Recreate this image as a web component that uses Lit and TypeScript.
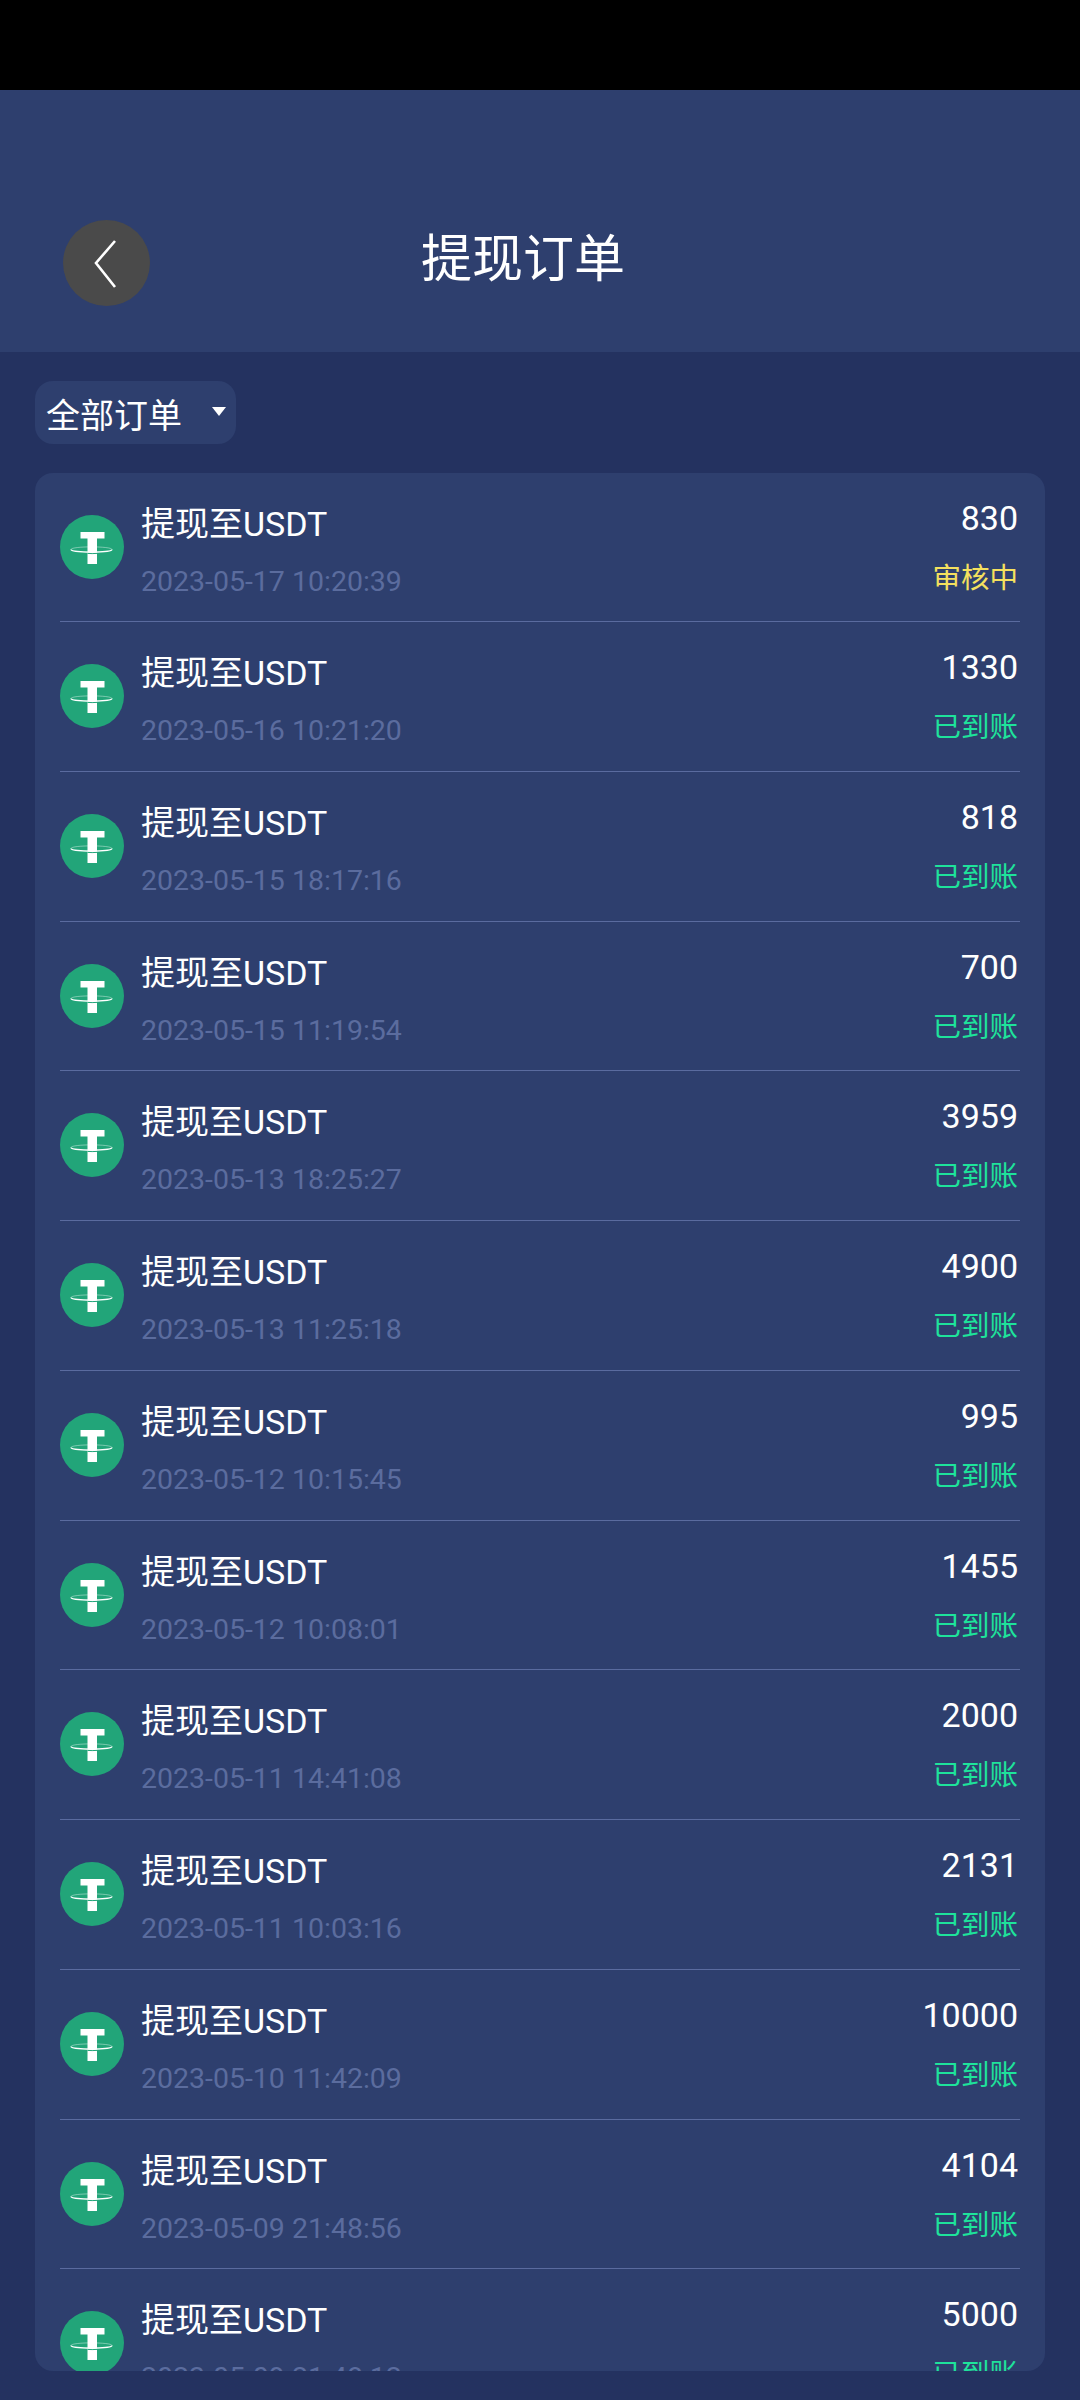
import { LitElement, html, css, svg } from "lit";
import { customElement } from "lit/decorators.js";

const rows: [string, string, string][] = [
  ["2023-05-17 10:20:39", "830", "审核中"],
  ["2023-05-16 10:21:20", "1330", "已到账"],
  ["2023-05-15 18:17:16", "818", "已到账"],
  ["2023-05-15 11:19:54", "700", "已到账"],
  ["2023-05-13 18:25:27", "3959", "已到账"],
  ["2023-05-13 11:25:18", "4900", "已到账"],
  ["2023-05-12 10:15:45", "995", "已到账"],
  ["2023-05-12 10:08:01", "1455", "已到账"],
  ["2023-05-11 14:41:08", "2000", "已到账"],
  ["2023-05-11 10:03:16", "2131", "已到账"],
  ["2023-05-10 11:42:09", "10000", "已到账"],
  ["2023-05-09 21:48:56", "4104", "已到账"],
  ["2023-05-09 21:48:12", "5000", "已到账"],
];

const tether = svg`
  <circle cx="32" cy="32" r="32" fill="#22a579"></circle>
  <rect x="20.5" y="17" width="24" height="6.5" fill="#fff"></rect>
  <rect x="27.5" y="22" width="9.5" height="27" fill="#fff"></rect>
  <path d="M11 34.5 C11 31 52 31 52 34.5" fill="none" stroke="#fff" stroke-opacity=".4" stroke-width="1"></path>
  <path d="M11 34.5 C11 38 52 38 52 34.5" fill="none" stroke="#fff" stroke-width="1.3"></path>
  <path d="M27.5 38.4 Q32 38.8 37 38.4" fill="none" stroke="#22a579" stroke-width="1"></path>
`;

@customElement("app-root")
export class AppRoot extends LitElement {
  static styles = css`
    :host {
      display: block;
      width: 1080px;
      height: 2400px;
      overflow: hidden;
      background: #243260;
      font-family: Roboto, "Noto Sans CJK SC", sans-serif;
      color: #fff;
    }
    .status-bar { height: 90px; background: #000; }
    .header {
      height: 262px;
      box-sizing: border-box;
      background: #2e3f6e;
      display: flex;
      align-items: flex-start;
      padding: 130px 0 0 63px;
    }
    .back {
      width: 87px;
      height: 86px;
      border-radius: 50%;
      background: #4a4a4a;
      display: flex;
      align-items: center;
      justify-content: center;
      flex: none;
    }
    .back svg { display: block; }
    .title {
      margin: -3px 0 0 271px;
      font-size: 51px;
      line-height: 86px;
    }
    .content { padding: 29px 35px 0 35px; }
    .select {
      width: 201px;
      height: 63px;
      box-sizing: border-box;
      border-radius: 18px;
      background: #2e3f6e;
      display: flex;
      align-items: center;
      padding-left: 11px;
      font-size: 34px;
    }
    .select .label { margin-top: 2px; }
    .select .arrow {
      width: 0;
      height: 0;
      margin-left: 30px;
      margin-top: -3px;
      border-left: 7px solid transparent;
      border-right: 7px solid transparent;
      border-top: 9px solid #fff;
    }
    .card {
      margin-top: 29px;
      height: 1898px;
      box-sizing: border-box;
      overflow: hidden;
      border-radius: 18px;
      background: #2e3f6e;
      padding: 0 25px;
    }
    .row {
      height: 149.75px;
      box-sizing: border-box;
      border-bottom: 1px solid #5a6b9f;
      display: flex;
      align-items: flex-start;
    }
    .row:first-child { height: 149px; }
    .icon {
      width: 64px;
      height: 64px;
      margin-top: 42px;
      flex: none;
      display: block;
    }
    .main { margin-left: 17px; flex: 1; min-width: 0; }
    .name { font-size: 34px; line-height: 40px; margin-top: 31px; }
    .date { font-size: 28.5px; line-height: 34px; margin-top: 21px; color: #5b6c9e; }
    .right { text-align: right; margin-right: 2px; }
    .amount { font-size: 34px; line-height: 40px; margin-top: 25px; }
    .status { font-size: 28.5px; line-height: 36px; margin-top: 23px; color: #1ee39b; }
    .status.pending { color: #f4e05e; }
  `;

  render() {
    return html`
      <div class="status-bar"></div>
      <div class="header">
        <div class="back">
          <svg width="87" height="86" viewBox="0 0 87 86">
            <path d="M52 21 L33 43 L52 67" fill="none" stroke="#fff" stroke-width="2.6"></path>
          </svg>
        </div>
        <div class="title">提现订单</div>
      </div>
      <div class="content">
        <div class="select"><span class="label">全部订单</span><span class="arrow"></span></div>
        <div class="card">
          ${rows.map(
            ([date, amount, status]) => html`
              <div class="row">
                <svg class="icon" viewBox="0 0 64 64">${tether}</svg>
                <div class="main">
                  <div class="name">提现至USDT</div>
                  <div class="date">${date}</div>
                </div>
                <div class="right">
                  <div class="amount">${amount}</div>
                  <div class="status ${status === "审核中" ? "pending" : ""}">${status}</div>
                </div>
              </div>
            `
          )}
        </div>
      </div>
    `;
  }
}
